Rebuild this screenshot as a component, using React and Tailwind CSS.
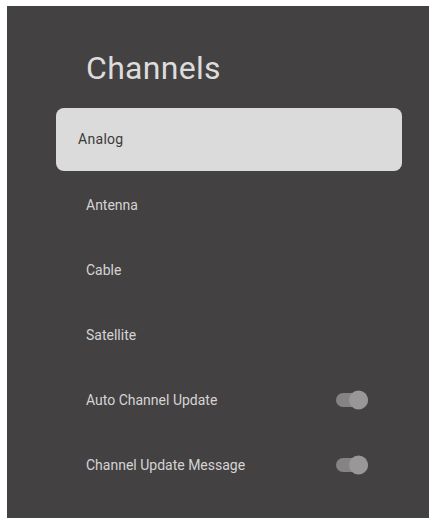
export default function App() {
  const rows = [
    { label: "Antenna" },
    { label: "Cable" },
    { label: "Satellite" },
    { label: "Auto Channel Update", toggle: true },
    { label: "Channel Update Message", toggle: true },
  ];
  return (
    <div
      className="w-[434px] h-[518px] bg-white pt-[6px] pl-[7px] pr-[5px] overflow-hidden"
      style={{ fontFamily: "Roboto, 'Noto Sans', sans-serif" }}
    >
      <div className="h-[512px] bg-[#444142] flex flex-col pt-[42px]">
        <div className="pl-[79px] h-[40px] leading-[40px] text-[32px] text-[#dcdcdc] tracking-[0.3px]">Channels</div>
        <div className="mt-[20px] ml-[49px] mr-[27px] h-[63px] rounded-[8px] bg-[#dcdbdb] flex items-center pl-[22px] text-[14px] text-[#3a3a3a] tracking-[0.3px]">
          Analog
        </div>
        <div className="h-[1.5px]" />
        {rows.map((r) => (
          <div key={r.label} className="h-[65px] flex items-center justify-between pl-[79px] pr-[61px]">
            <span className="text-[14px] text-[#d4d4d4]">{r.label}</span>
            {r.toggle && (
              <div className="relative w-[32px] h-[14px] rounded-full bg-[#858384]">
                <div className="absolute right-0 top-1/2 -translate-y-1/2 w-[19px] h-[19px] rounded-full bg-[#999797]" />
              </div>
            )}
          </div>
        ))}
      </div>
    </div>
  );
}
